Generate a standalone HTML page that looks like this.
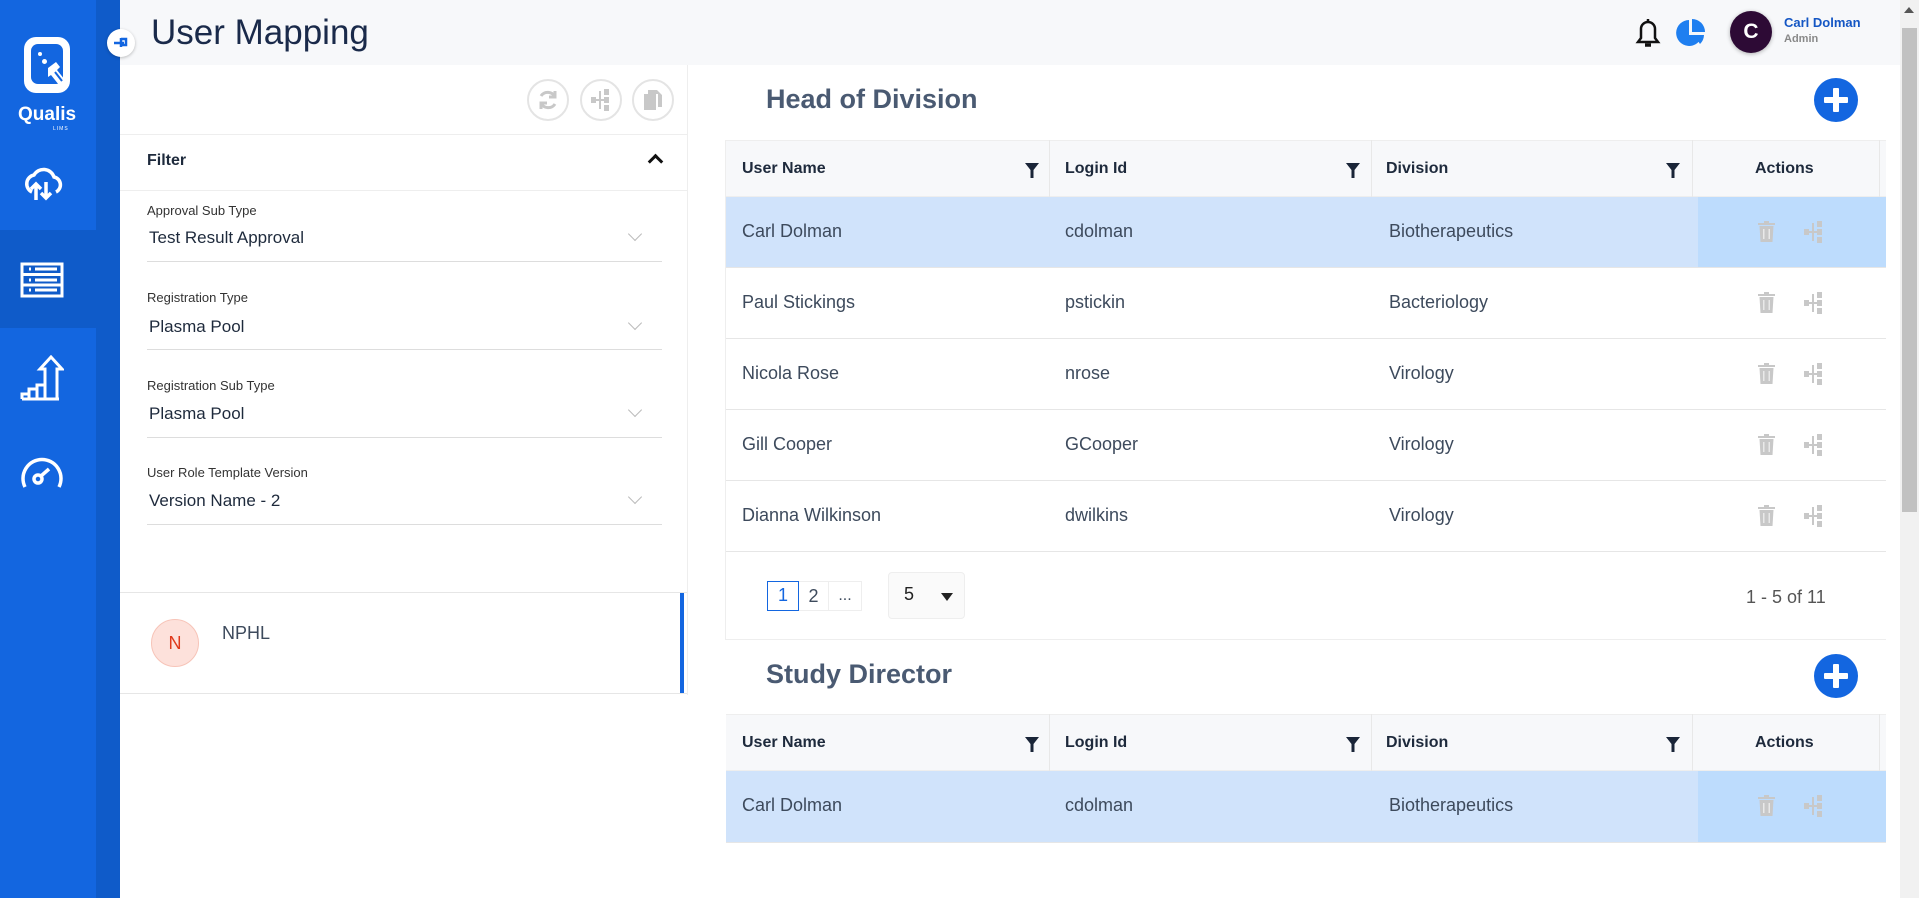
<!DOCTYPE html>
<html><head><meta charset="utf-8"><style>
*{box-sizing:border-box;margin:0;padding:0}
body{width:1919px;height:898px;overflow:hidden;font-family:"Liberation Sans",sans-serif;background:#fff;position:relative;color:#1e2a3c}
.a{position:absolute}
.sb{left:0;top:0;width:96px;height:898px;background:#1366e0}
.sb2{left:96px;top:0;width:24px;height:898px;background:#0f5bc9}
.sel{left:0;top:230px;width:96px;height:98px;background:#0f5bc9}
.hdr{left:120px;top:0;width:1780px;height:65px;background:#f7f8fa}
.lbl{font-size:13px;color:#333;left:147px}
.val{font-size:17px;color:#1e2a3c;left:149px}
.ln{left:147px;width:515px;height:1px;background:#ddd}
.chev{left:630px;width:10px;height:10px;border-right:1.5px solid #bbb;border-bottom:1.5px solid #bbb;transform:rotate(45deg)}
.th{background:#f7f8fa;border-top:1px solid #eee;border-bottom:1px solid #eee}
.tht{font-size:16px;font-weight:bold;color:#1e2a3c}
.td{font-size:18px;color:#3d4a5c}
.cb{width:1px;background:#e8e8e8}
.rl{left:726px;width:1160px;height:1px;background:#e6e6e6}
.tb{border-radius:50%;width:42px;height:42px;border:2px solid #e4e4e4;background:#fff}
.plus{width:44px;height:44px;border-radius:50%;background:#1366e0}
.plus:before,.plus:after{content:"";position:absolute;background:#fff;left:19px;top:10px;width:6px;height:24px;border-radius:1px}
.plus:after{left:10px;top:19px;width:24px;height:6px}
.h2{font-size:27px;font-weight:bold;color:#4a5a72}
</style></head><body>
<div class="a sb"></div><div class="a sb2"></div><div class="a sel"></div>
<!-- logo -->
<div class="a" style="left:24px;top:37px;width:46px;height:56px;border-radius:12px;background:#fff"></div>
<div class="a" style="left:31px;top:44px;width:32px;height:40px;border-radius:7px;background:#1366e0"></div>
<div class="a" style="left:38px;top:52px;width:4px;height:4px;border-radius:50%;background:#fff"></div>
<div class="a" style="left:42px;top:59px;width:5px;height:5px;border-radius:50%;background:#fff"></div>
<svg class="a" style="left:44px;top:60px" width="26" height="30" viewBox="0 0 26 30"><path d="M4 8 12 2l4 5-3 3 8 10a4 4 0 0 1-6 5L7 15l-3 2z" fill="#fff"/><path d="M11 12l7 9" stroke="#1366e0" stroke-width="2"/></svg>
<div class="a" style="left:18px;top:104px;font-size:19px;font-weight:bold;color:#fff">Qualis</div>
<div class="a" style="left:53px;top:126px;font-size:5px;color:#fff;letter-spacing:1px">LIMS</div>
<svg class="a" style="left:20px;top:160px" width="46" height="46" viewBox="0 0 46 46" fill="none" stroke="#fff" stroke-width="3.5"><path d="M12 32a9 9 0 0 1 2-17 11 11 0 0 1 20 2 8 8 0 0 1 2 15"/><path d="M16 40V24m-5 5 5-5 5 5M26 22v16m-5-5 5 5 5-5"/></svg>
<svg class="a" style="left:20px;top:262px" width="44" height="36" viewBox="0 0 44 36" fill="none" stroke="#fff" stroke-width="3"><rect x="2" y="2" width="40" height="32"/><path d="M2 12.5h40M2 23h40M9 7h2M9 18h2M9 28h2M15 7h22M15 18h22M15 28h22"/></svg>
<svg class="a" style="left:20px;top:355px" width="44" height="46" viewBox="0 0 44 46" fill="none" stroke="#fff" stroke-width="3"><path d="M2 44v-5h7v5M9 44v-10h8v10M17 44v-14h8v14M25 44V14h-5l11-12 11 12h-5v30M2 44h37"/></svg>
<svg class="a" style="left:20px;top:455px" width="44" height="34" viewBox="0 0 44 34" fill="none" stroke="#fff" stroke-width="3.5"><path d="M5 32A19 19 0 1 1 39 32"/><circle cx="18" cy="24" r="4"/><path d="M21 21 29 14"/></svg>
<div class="a hdr"></div>
<div class="a" style="left:107px;top:29px;width:28px;height:28px;border-radius:50%;background:#fff;box-shadow:0 1px 3px rgba(0,0,0,.25)"></div>
<svg class="a" style="left:113px;top:36px" width="16" height="14" viewBox="0 0 16 14" fill="none" stroke="#1366e0" stroke-width="2.5"><path d="M1 7h10M8 2v9M8 3h5v6H8"/></svg>
<div class="a" style="left:151px;top:13px;font-size:35px;color:#1a2a4a">User Mapping</div>
<svg class="a" style="left:1634px;top:17px" width="28" height="32" viewBox="0 0 28 32" fill="none" stroke="#111" stroke-width="2.5"><path d="M4 25h20l-3-4V12a7 7 0 0 0-14 0v9z"/><path d="M14 2v3"/><path d="M11 28h6" stroke-width="3.5"/></svg>
<svg class="a" style="left:1676px;top:18px" width="30" height="30" viewBox="0 0 30 30"><path d="M13 2A13 13 0 1 0 26 17H13z" fill="#1f7ff0"/><path d="M16 1v13h13A13 13 0 0 0 16 1z" fill="#1f7ff0"/><path d="M18 17h10a13 13 0 0 1-4 9z" fill="#1f7ff0"/></svg>
<div class="a" style="left:1730px;top:11px;width:42px;height:42px;border-radius:50%;background:#2d0a35;box-shadow:0 1px 4px rgba(0,0,0,.3);color:#fff;font-size:21px;font-weight:bold;text-align:center;line-height:42px">C</div>
<div class="a" style="left:1784px;top:15px;font-size:13px;font-weight:bold;color:#1456c4">Carl Dolman</div>
<div class="a" style="left:1784px;top:33px;font-size:11px;color:#888;font-weight:bold">Admin</div>
<!-- left panel -->
<div class="a" style="left:687px;top:65px;width:1px;height:630px;background:#eee"></div>
<div class="a tb" style="left:527px;top:79px"></div><div class="a tb" style="left:580px;top:79px"></div><div class="a tb" style="left:632px;top:79px"></div>
<svg class="a" style="left:537px;top:89px" width="22" height="22" viewBox="0 0 22 22" fill="none" stroke="#c8c8c8" stroke-width="3"><path d="M18 8A8 8 0 0 0 4 7M4 14a8 8 0 0 0 14 1"/><path d="M18 2v6h-6M4 20v-6h6"/></svg>
<svg class="a" style="left:590px;top:88px" width="22" height="24" viewBox="0 0 22 24" fill="#c8c8c8"><rect x="1" y="9" width="5" height="6"/><rect x="14" y="1" width="5" height="6"/><rect x="14" y="9" width="5" height="6"/><rect x="14" y="17" width="5" height="6"/><rect x="9" y="3" width="2" height="18"/><rect x="6" y="11" width="8" height="2"/></svg>
<svg class="a" style="left:643px;top:89px" width="20" height="22" viewBox="0 0 20 22" fill="#c8c8c8"><rect x="1" y="5" width="12" height="16"/><path d="M5 1h9l5 5v12H15V5H5z"/></svg>
<div class="a" style="left:120px;top:134px;width:567px;height:1px;background:#eee"></div>
<div class="a" style="left:147px;top:152px;font-size:16px;font-weight:bold;color:#1e2a3c">Filter</div>
<div class="a" style="left:650px;top:156px;width:11px;height:11px;border-left:3px solid #111;border-top:3px solid #111;transform:rotate(45deg)"></div>
<div class="a" style="left:120px;top:190px;width:567px;height:1px;background:#eee"></div>
<div class="a lbl" style="top:203px">Approval Sub Type</div><div class="a val" style="top:228px">Test Result Approval</div><div class="a chev" style="top:229px"></div><div class="a ln" style="top:261px"></div>
<div class="a lbl" style="top:290px">Registration Type</div><div class="a val" style="top:317px">Plasma Pool</div><div class="a chev" style="top:318px"></div><div class="a ln" style="top:349px"></div>
<div class="a lbl" style="top:378px">Registration Sub Type</div><div class="a val" style="top:404px">Plasma Pool</div><div class="a chev" style="top:405px"></div><div class="a ln" style="top:437px"></div>
<div class="a lbl" style="top:465px">User Role Template Version</div><div class="a val" style="top:491px">Version Name - 2</div><div class="a chev" style="top:492px"></div><div class="a ln" style="top:524px"></div>
<div class="a" style="left:120px;top:592px;width:567px;height:1px;background:#e6e6e6"></div>
<div class="a" style="left:120px;top:693px;width:567px;height:1px;background:#e6e6e6"></div>
<div class="a" style="left:680px;top:593px;width:4px;height:100px;background:#1366e0"></div>
<div class="a" style="left:151px;top:619px;width:48px;height:48px;border-radius:50%;background:#fde1db;border:1px solid #f7c4b8;color:#e03a1c;font-size:18px;text-align:center;line-height:46px">N</div>
<div class="a" style="left:222px;top:623px;font-size:18px;color:#3d4a5c">NPHL</div>
<!-- right -->
<div class="a h2" style="left:766px;top:84px">Head of Division</div>
<div class="a plus" style="left:1814px;top:78px"></div>
<div class="a" style="left:725px;top:140px;width:1px;height:500px;background:#eee"></div>
<div class="a" style="left:725px;top:639px;width:1161px;height:1px;background:#eee"></div>
<div class="a th" style="left:726px;top:140px;width:1160px;height:57px"></div>
<div class="a" style="left:726px;top:197px;width:1160px;height:70px;background:#d0e3fb"></div>
<div class="a" style="left:1698px;top:197px;width:188px;height:70px;background:#bddcfd"></div>
<div class="a th" style="left:726px;top:714px;width:1160px;height:57px"></div>
<div class="a" style="left:726px;top:771px;width:1160px;height:71px;background:#d0e3fb"></div>
<div class="a" style="left:1698px;top:771px;width:188px;height:71px;background:#bddcfd"></div>
<div class="a rl" style="top:267px"></div><div class="a rl" style="top:338px"></div><div class="a rl" style="top:409px"></div><div class="a rl" style="top:480px"></div><div class="a rl" style="top:551px"></div><div class="a rl" style="top:842px"></div>
<div id="cols"></div>
<div class="a" style="left:767px;top:581px;width:32px;height:30px;border:1.5px solid #1366e0;color:#1366e0;font-size:18px;text-align:center;line-height:27px">1</div>
<div class="a" style="left:799px;top:581px;width:30px;height:30px;border:1px solid #eee;border-left:0;font-size:18px;text-align:center;line-height:28px;color:#3d4a5c">2</div>
<div class="a" style="left:829px;top:581px;width:33px;height:30px;border:1px solid #eee;border-left:0;font-size:16px;text-align:center;line-height:28px;color:#3d4a5c">...</div>
<div class="a" style="left:888px;top:572px;width:77px;height:47px;border:1px solid #eee;border-radius:4px;background:#fafafa"></div>
<div class="a" style="left:904px;top:584px;font-size:18px;color:#222">5</div>
<div class="a" style="left:941px;top:593px;width:0;height:0;border-left:6px solid transparent;border-right:6px solid transparent;border-top:8px solid #222"></div>
<div class="a" style="left:1746px;top:587px;font-size:18px;color:#555">1 - 5 of 11</div>
<div class="a h2" style="left:766px;top:659px">Study Director</div>
<div class="a plus" style="left:1814px;top:654px"></div>
<!-- scrollbar -->
<div class="a" style="left:1900px;top:0;width:19px;height:898px;background:#f1f1f1"></div>
<div class="a" style="left:1902px;top:28px;width:15px;height:484px;background:#c1c1c1"></div>
<div class="a" style="left:1904px;top:7px;width:0;height:0;border-left:5px solid transparent;border-right:5px solid transparent;border-bottom:6px solid #555"></div>
<script>
var h='';
function hdr(t){
 h+='<div class="a tht" style="left:742px;top:'+(t+20)+'px">User Name</div><div class="a tht" style="left:1065px;top:'+(t+20)+'px">Login Id</div><div class="a tht" style="left:1386px;top:'+(t+20)+'px">Division</div><div class="a tht" style="left:1755px;top:'+(t+20)+'px">Actions</div>';
 [1025,1346,1666].forEach(function(x){h+='<svg class="a" style="left:'+x+'px;top:'+(t+23)+'px" width="14" height="16" viewBox="0 0 14 16"><path d="M0 0h14L8.5 7v8h-3V7z" fill="#1a2538"/></svg>'});
 [1049,1371,1692,1879].forEach(function(x){h+='<div class="a cb" style="left:'+x+'px;top:'+t+'px;height:57px"></div>'});
}
function row(t,a,b,c){
 h+='<div class="a td" style="left:742px;top:'+(t+24)+'px">'+a+'</div><div class="a td" style="left:1065px;top:'+(t+24)+'px">'+b+'</div><div class="a td" style="left:1389px;top:'+(t+24)+'px">'+c+'</div>';
 h+='<svg class="a" style="left:1758px;top:'+(t+24)+'px" width="17" height="21" viewBox="0 0 17 21" fill="#c8c8c8"><rect x="0" y="2" width="17" height="2"/><rect x="6" y="0" width="5" height="2"/><path d="M1.5 5h14l-1 16h-12z"/><rect x="5" y="8" width="1.5" height="10" fill="#fff" opacity=".6"/><rect x="10.5" y="8" width="1.5" height="10" fill="#fff" opacity=".6"/></svg>';
 h+='<svg class="a" style="left:1803px;top:'+(t+23)+'px" width="22" height="24" viewBox="0 0 22 24" fill="#c8c8c8"><rect x="1" y="9" width="5" height="6"/><rect x="14" y="1" width="5" height="6"/><rect x="14" y="9" width="5" height="6"/><rect x="14" y="17" width="5" height="6"/><rect x="9" y="3" width="2" height="18"/><rect x="6" y="11" width="8" height="2"/></svg>';
}
hdr(140);
row(197,'Carl Dolman','cdolman','Biotherapeutics');
row(268,'Paul Stickings','pstickin','Bacteriology');
row(339,'Nicola Rose','nrose','Virology');
row(410,'Gill Cooper','GCooper','Virology');
row(481,'Dianna Wilkinson','dwilkins','Virology');
hdr(714);
row(771,'Carl Dolman','cdolman','Biotherapeutics');
document.getElementById('cols').innerHTML=h;
</script>
</body></html>
